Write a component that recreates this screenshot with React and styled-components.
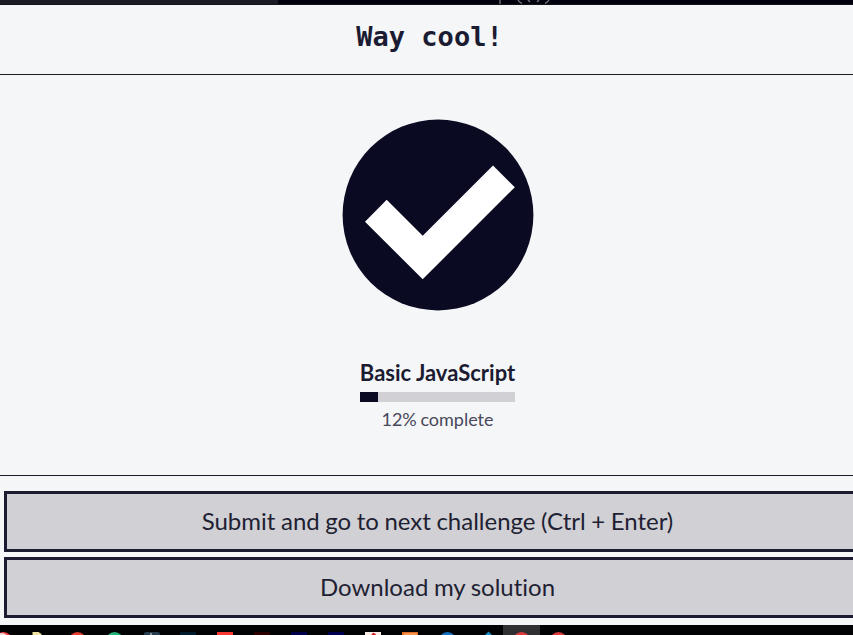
import React from "react";
import styled, { createGlobalStyle } from "styled-components";

const GlobalStyle = createGlobalStyle`
  * { box-sizing: border-box; }
  body { margin: 0; background: #f5f6f7; overflow: hidden; }
`;

const Screen = styled.div`
  width: 853px;
  height: 635px;
  overflow: hidden;
  display: flex;
  flex-direction: column;
  background: #f5f6f8;
  color: #1b1b32;
  font-family: Lato, sans-serif;
  font-variant-ligatures: none;
`;

const TopStrip = styled.div`
  flex: 0 0 5px;
  height: 5px;
  min-height: 0;
  display: flex;
  background: #02020f;
  border-bottom: 1px solid #14141f;
`;

const TopTab = styled.div`
  width: 278px;
  height: 4px;
  background: #1b1b26;
`;

const LogoSliver = styled.svg`
  margin-left: 218px;
  width: 60px;
  height: 4px;
  flex: none;
`;

const Header = styled.header`
  flex: 0 0 70px;
  width: 859px;
  display: flex;
  justify-content: center;
  border-bottom: 1px solid #1b1b27;
`;

const Title = styled.h1`
  margin: 0;
  padding-top: 16px;
  font: 700 27px/32px "DejaVu Sans Mono", monospace;
`;

const Body = styled.main`
  flex: 0 0 401px;
  width: 875px;
  padding-top: 44px;
  display: flex;
  flex-direction: column;
  align-items: center;
  border-bottom: 1px solid #1b1b27;
`;

const CheckMark = styled.svg`
  width: 192px;
  height: 192px;
  flex: none;
`;

const Progress = styled.section`
  width: 155px;
  margin-top: 47px;
  display: flex;
  flex-direction: column;
  align-items: center;
`;

const BlockName = styled.div`
  font-size: 22px;
  line-height: 30px;
  font-weight: 700;
  white-space: nowrap;
`;

const Track = styled.div`
  width: 155px;
  height: 10px;
  margin-top: 4px;
  background: #d0d0d5;
`;

const Fill = styled.div`
  width: round(down, ${(p) => p.$percent}%, 1px);
  height: 100%;
  background: #0a0a23;
`;

const Percent = styled.div`
  margin-top: 5px;
  font-size: 18px;
  line-height: 24px;
  word-spacing: -1px;
  color: #48485a;
  white-space: nowrap;
`;

const Actions = styled.footer`
  flex: 0 0 149px;
  width: 871px;
  padding: 15px 0 0 4px;
  display: flex;
  flex-direction: column;
  gap: 5px;
`;

const ActionButton = styled.button`
  height: 61px;
  padding: 0 0 1px;
  border: 3px solid #1b1b32;
  border-radius: 0;
  background: #d0d0d5;
  color: #1f1f33;
  font: 400 24px/32px Lato, sans-serif;
  font-variant-ligatures: none;
  word-spacing: -0.6px;
`;

const Taskbar = styled.nav`
  flex: 0 0 10px;
  display: flex;
  background: #000204;
`;

const Task = styled.div`
  flex: 0 0 37px;
  height: 10px;
  background: ${(p) => (p.$active ? "#303033" : "transparent")};

  &:first-child { margin-left: -15px; }
`;

const TaskIcon = styled.svg`
  display: block;
  width: 37px;
  height: 10px;
`;

const Disc = ({ color, r = 9 }) => <circle cx="18.5" cy={7 + r} r={r} fill={color} />;
const Tile = ({ color }) => <rect x="10" y="7" width="16" height="16" fill={color} />;

const tasks = [
  <><Disc color="#ed4142" /><circle cx="17" cy="14" r="6" fill="#f6d8d8" /></>,
  <path d="M10.5 7h6l3 2v3h-9z" fill="#eee3a0" />,
  <Disc color="#e53c30" />,
  <Disc color="#25b477" />,
  <><rect x="11" y="7" width="16" height="16" rx="2" fill="#263d4d" /><path d="M18 8v2" stroke="#9faab1" strokeWidth="1.5" /></>,
  <Tile color="#001a2d" />,
  <Tile color="#f73833" />,
  <Tile color="#2d0000" />,
  <Tile color="#00004c" />,
  <Tile color="#000050" />,
  <><Tile color="#f9eee9" /><path d="M17 10l1.5-1 2 1" stroke="#d51c20" strokeWidth="2" fill="none" /></>,
  <><Tile color="#e46e22" /><path d="M12 9h13" stroke="#ffbe80" /></>,
  <Disc color="#126fc3" />,
  <path d="M22.5 6.5l4 4h-8z" fill="#188bcb" />,
  <Disc color="#d93b3b" />,
  <Disc color="#d93b3b" />,
];

export default function App() {
  return (
    <>
      <GlobalStyle />
      <Screen>
        <TopStrip>
          <TopTab />
          <LogoSliver viewBox="0 0 60 4">
            <path d="M4 0v4M22 0q1 2 4 3.5M53 0q-1 2-4 3.5M32 0l2 2M43 0l-2 2" fill="none" stroke="#77777f" strokeWidth="1.3" />
          </LogoSliver>
        </TopStrip>
        <Header><Title>Way cool!</Title></Header>
        <Body>
          <CheckMark viewBox="342 119 192 192">
            <circle cx="438" cy="215" r="95.4" fill="#0a0a23" />
            <path d="M386.7 199.7l36 36 70.3-70.2 21.8 21.7-92.1 92.1-57.7-57.6z" fill="#fff" />
          </CheckMark>
          <Progress>
            <BlockName>Basic JavaScript</BlockName>
            <Track><Fill $percent={12} /></Track>
            <Percent>12% complete</Percent>
          </Progress>
        </Body>
        <Actions>
          <ActionButton>Submit and go to next challenge (Ctrl + Enter)</ActionButton>
          <ActionButton>Download my solution</ActionButton>
        </Actions>
        <Taskbar>
          {tasks.map((icon, i) => (
            <Task key={i} $active={i === 14}>
              <TaskIcon viewBox="0 0 37 10">{icon}</TaskIcon>
            </Task>
          ))}
        </Taskbar>
      </Screen>
    </>
  );
}
